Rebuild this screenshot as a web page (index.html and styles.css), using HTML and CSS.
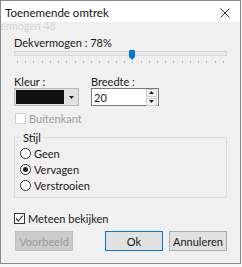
FILE: index.html
```html
<!DOCTYPE html>
<html>
<head>
<meta charset="utf-8">
<link rel="stylesheet" href="styles.css">
</head>
<body>
<div class="window">
  <div class="titlebar">
    <span class="title">Toenemende omtrek</span>
    <svg class="close" width="10" height="10" viewBox="0 0 10 10"><path d="M0.5 0.5L9.5 9.5M9.5 0.5L0.5 9.5" stroke="#333" stroke-width="1" fill="none"/></svg>
  </div>
  <div class="content">
    <span class="ghost">ermogen 48</span>
    <div class="label">Dekvermogen : 78%</div>
    <div class="slider">
      <div class="track"></div>
      <div class="thumb" style="left:115px"></div>
      <div class="ticks">
        <i></i><i></i><i></i><i></i><i></i><i></i><i></i><i></i><i></i><i></i><i></i><i></i><i></i>
        <i></i><i></i><i></i><i></i><i></i><i></i><i></i><i></i><i></i><i></i><i></i><i></i><i></i>
      </div>
    </div>
    <div class="row2">
      <div class="col col-color">
        <div class="label">Kleur :</div>
        <div class="combo">
          <div class="swatch"></div>
          <div class="drop"><svg width="5" height="3" viewBox="0 0 5 3"><path d="M0 0H5L2.5 3Z" fill="#222"/></svg></div>
        </div>
      </div>
      <div class="col col-width">
        <div class="label">Breedte :</div>
        <div class="spin">
          <span class="spin-val">20</span>
          <div class="spin-btns">
            <div class="sb"><svg width="5" height="3" viewBox="0 0 5 3"><path d="M0 3H5L2.5 0Z" fill="#222"/></svg></div>
            <div class="sb"><svg width="5" height="3" viewBox="0 0 5 3"><path d="M0 0H5L2.5 3Z" fill="#222"/></svg></div>
          </div>
        </div>
      </div>
    </div>
    <div class="check disabled"><span class="box"></span><span>Buitenkant</span></div>
    <fieldset class="group">
      <legend>Stijl</legend>
      <div class="radio"><span class="circle"></span><span>Geen</span></div>
      <div class="radio"><span class="circle on"></span><span>Vervagen</span></div>
      <div class="radio"><span class="circle"></span><span>Verstrooien</span></div>
    </fieldset>
    <div class="check meteen"><span class="box checked"><svg width="9" height="9" viewBox="0 0 9 9"><path d="M1 4.5L3.5 7L8 1.5" stroke="#222" stroke-width="1.1" fill="none"/></svg></span><span>Meteen bekijken</span></div>
    <div class="buttons">
      <div class="btn btn-disabled">Voorbeeld</div>
      <div class="btn btn-default">Ok</div>
      <div class="btn">Annuleren</div>
    </div>
  </div>
</div>
</body>
</html>
```
FILE: styles.css
```css
html, body {
  margin: 0;
  padding: 0;
  background: #f7f7f7;
}
body {
  font-family: Lato, "Open Sans", sans-serif;
  font-size: 11px;
  color: #1a1a1a;
}
.window {
  width: 239px;
  height: 262px;
  border: 1px solid #8a8a8a;
  display: flex;
  flex-direction: column;
  background: #f0f0f0;
  overflow: hidden;
}
.titlebar {
  height: 21px;
  flex: none;
  background: #ffffff;
  display: flex;
  align-items: center;
  justify-content: space-between;
  padding: 0 10px 0 4px;
}
.title {
  font-size: 11.5px;
  color: #111;
  line-height: 13px;
  margin-top: 1px;
}
.close {
  display: block;
  margin-top: 2px;
}
.content {
  position: relative;
  flex: 1;
  padding: 14px 13px 0 13px;
  display: flex;
  flex-direction: column;
}
.ghost {
  position: absolute;
  left: -1px;
  top: -1px;
  font-size: 10.5px;
  line-height: 11px;
  color: #d6d6d6;
}
.label {
  line-height: 13px;
  height: 13px;
  white-space: nowrap;
}
.slider {
  position: relative;
  height: 16px;
}
.track {
  margin-top: 2px;
  height: 3px;
  background: #e7eaea;
  border: 1px solid #d6d6d6;
}
.thumb {
  position: absolute;
  top: 1px;
  width: 6px;
  height: 7px;
  background: #0078d7;
  border-radius: 1px 1px 0 0;
}
.thumb::after {
  content: "";
  position: absolute;
  left: 0;
  top: 7px;
  border-left: 3px solid transparent;
  border-right: 3px solid transparent;
  border-top: 3px solid #0078d7;
}
.ticks {
  display: flex;
  justify-content: space-between;
  padding: 0 3px;
  margin-top: 5px;
}
.ticks i {
  display: block;
  width: 1px;
  height: 2px;
  background: #b4b4b4;
}
.row2 {
  display: flex;
  gap: 12px;
  margin-top: 10px;
}
.col {
  display: flex;
  flex-direction: column;
}
.combo {
  width: 62px;
  height: 16px;
  border: 1px solid #b8b8b8;
  background: #e1e1e1;
  display: flex;
  align-items: center;
  padding: 0 0 0 1px;
}
.swatch {
  width: 48px;
  height: 14px;
  background: #111;
}
.drop {
  flex: 1;
  display: flex;
  align-items: center;
  justify-content: center;
  height: 14px;
}
.drop svg, .sb svg {
  display: block;
}
.spin {
  width: 63px;
  height: 16px;
  border: 1px solid #7a7a7a;
  background: #fff;
  display: flex;
  align-items: center;
  justify-content: space-between;
  padding: 0 1px 0 2px;
}
.spin-val {
  line-height: 13px;
}
.spin-btns {
  display: flex;
  flex-direction: column;
  gap: 1px;
}
.sb {
  width: 9px;
  height: 6px;
  border: 1px solid #d0d0d0;
  background: #f4f4f4;
  display: flex;
  align-items: center;
  justify-content: center;
}
.check {
  display: flex;
  align-items: center;
  gap: 3px;
  height: 13px;
  line-height: 13px;
}
.check.disabled {
  margin-top: 6px;
  color: #9d9d9d;
  padding-left: 1px;
}
.box {
  width: 9px;
  height: 9px;
  border: 1px solid #333;
  background: #fff;
  display: flex;
  align-items: center;
  justify-content: center;
}
.disabled .box {
  border-color: #d2d2d2;
}
.group {
  margin: 6px 0 0 0;
  border: 1px solid #dcdcdc;
  padding: 1px 0 4px 5px;
}
.group legend {
  margin-left: 1px;
  padding: 0 2px;
  line-height: 13px;
}
.radio {
  display: flex;
  align-items: center;
  gap: 3px;
  height: 16px;
}
.circle {
  border: 1px solid #333;
  border-radius: 50%;
  background: #fff;
  box-sizing: border-box;
  width: 11px;
  height: 11px;
  position: relative;
}
.circle.on::after {
  content: "";
  position: absolute;
  left: 2px;
  top: 2px;
  width: 5px;
  height: 5px;
  border-radius: 50%;
  background: #222;
}
.meteen {
  margin-top: 14px;
  height: 13px;
}
.buttons {
  display: flex;
  margin-top: 6px;
  padding-left: 1px;
}
.btn {
  width: 56px;
  height: 18px;
  border: 1px solid #adadad;
  background: #e1e1e1;
  display: flex;
  align-items: center;
  justify-content: center;
  line-height: 13px;
}
.btn-disabled {
  background: #cccccc;
  border-color: #bfbfbf;
  color: #9a9a9a;
}
.btn-default {
  margin-left: auto;
  border-color: #0078d7;
  margin-right: 6px;
}
```
